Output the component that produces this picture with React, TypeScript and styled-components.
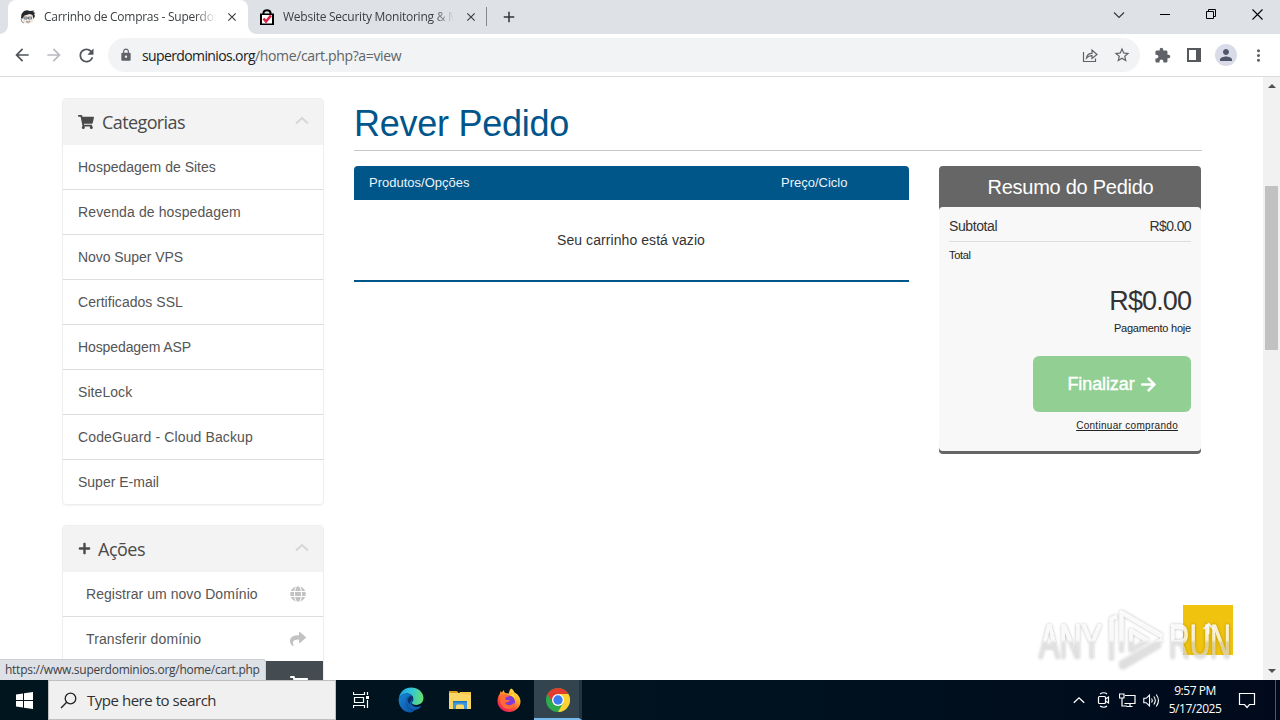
import React from 'react';
import styled, { createGlobalStyle } from 'styled-components';
import { FaShoppingCart, FaPlus, FaGlobe, FaShare, FaArrowRight, FaArrowUp } from 'react-icons/fa';
import { MdArrowBack, MdArrowForward, MdRefresh, MdLock, MdExtension, MdStarBorder, MdPerson, MdMoreVert, MdClose, MdAdd } from 'react-icons/md';

const Global = createGlobalStyle`
  *{box-sizing:border-box}
  html,body{margin:0;padding:0;overflow:hidden}
  svg{display:block;flex:none}
`;
const ui = `'Open Sans','Noto Sans',sans-serif`;
const arial = `'Liberation Sans',Arial,sans-serif`;

const Desktop = styled.div`width:1280px;height:720px;display:flex;flex-direction:column;background:#fff;font-family:${arial};position:relative;overflow:hidden;`;

/* browser chrome */
const TabStrip = styled.div`height:34px;flex:none;background:#dee1e6;display:flex;align-items:stretch;color:#3c4043;font-family:${ui};font-size:12px;`;
const Tab = styled.div<{ $active?: boolean; $w: number }>`
  width:${p => p.$w}px;display:flex;align-items:center;position:relative;
  background:${p => (p.$active ? '#fff' : 'transparent')};
  border-radius:8px 8px 0 0;
`;
const TabFoot = styled.i<{ $right?: boolean }>`
  position:absolute;bottom:0;width:8px;height:8px;
  ${p => (p.$right ? 'right:-8px' : 'left:-8px')};
  background:radial-gradient(circle at ${p => (p.$right ? '100%' : '0')} 0,transparent 7.5px,#fff 8px);
`;
const TabTitle = styled.span<{ $w: number; $ls: number; $fade: string }>`
  width:${p => p.$w}px;overflow:hidden;white-space:nowrap;letter-spacing:${p => p.$ls}px;line-height:18px;
  mask-image:linear-gradient(90deg,#000 ${p => p.$fade},transparent);
`;
const TabGap = styled.span<{ $w: number }>`width:${p => p.$w}px;flex:none;`;
const TabDivider = styled.i`width:1px;height:19px;background:#85898e;margin:7px 12px 0 1px;`;
const NewTab = styled.div`width:20px;display:flex;align-items:center;justify-content:center;color:#303438;`;
const WindowButtons = styled.div`margin-left:auto;display:flex;align-items:center;height:29px;`;
const WinBtn = styled.div`width:46px;display:flex;justify-content:center;`;

const Toolbar = styled.div`height:43px;flex:none;display:flex;align-items:center;background:#fff;border-bottom:1px solid #dadce0;padding:0 5px 0 10px;color:#5f6368;`;
const NavBtn = styled.div<{ $dim?: boolean }>`width:32px;height:32px;flex:none;display:flex;align-items:center;justify-content:center;padding-right:8px;color:${p => (p.$dim ? '#b9bbbe' : '#50545a')};`;
const Omnibox = styled.div`height:34px;width:1032px;flex:none;margin-left:2px;border-radius:17px;background:#f1f3f4;display:flex;align-items:center;padding:0 9px 0 11px;`;
const Url = styled.div`margin-left:9px;flex:1;font-family:${ui};font-size:14px;color:#5f6368;letter-spacing:-.36px;white-space:nowrap;b{font-weight:400;color:#202124;letter-spacing:-.62px}`;
const OmniIcon = styled.span`width:18px;margin-left:14px;display:flex;justify-content:center;`;
const ToolIcons = styled.div`display:flex;align-items:center;margin-left:6px;`;
const ToolBtn = styled.div`width:32px;display:flex;justify-content:center;`;
const Avatar = styled.div`width:22px;height:22px;border-radius:50%;background:#d9dce8;display:flex;align-items:center;justify-content:center;color:#50566a;`;

/* page */
const Viewport = styled.div`height:603px;flex:none;display:flex;position:relative;overflow:hidden;background:#fff;`;
const PageBody = styled.main`width:1263px;display:flex;padding:21px 0 0 62px;align-items:flex-start;`;
const Sidebar = styled.aside`width:262px;flex:none;display:flex;flex-direction:column;gap:20px;`;
const Panel = styled.section`border:1px solid #eeeeee;border-radius:4px;box-shadow:0 1px 1px rgba(0,0,0,.05);overflow:hidden;`;
const PanelHead = styled.h3`margin:0;height:46px;background:#f3f3f3;display:flex;align-items:center;padding:0 14px 1px 15px;font:400 18px/20px ${ui};color:#4a4a4a;`;
const PanelTitle = styled.span<{ $gap: number; $ls: number }>`margin-left:${p => p.$gap}px;flex:1;letter-spacing:${p => p.$ls}px;`;
const HeadChevron = styled.span`padding-bottom:2px;`;
const PanelRow = styled.div<{ $indent?: boolean; $end?: boolean }>`
  height:${p => (p.$end ? 44 : 45)}px;border-bottom:${p => (p.$end ? 0 : 1)}px solid #dddddd;display:flex;align-items:center;justify-content:space-between;
  padding:0 17px 1px ${p => (p.$indent ? 23 : 15)}px;font-size:14px;color:#555;
  svg{color:#c2c2c2}
`;
const RowText = styled.span<{ $ls: number }>`letter-spacing:${p => p.$ls}px;white-space:nowrap;`;
const DarkHead = styled.div`height:46px;background:#444c51;display:flex;justify-content:flex-end;padding:14px 15px;color:#fff;`;

const Main = styled.div`width:848px;margin-left:30px;flex:none;`;
const Title = styled.h1`margin:0;height:53px;border-bottom:1px solid #c8c8c8;font:400 36px/51px ${arial};color:#00568b;letter-spacing:-.27px;white-space:nowrap;`;
const Columns = styled.div`display:flex;gap:30px;margin-top:15px;align-items:flex-start;`;
const Cart = styled.section`width:555px;`;
const CartHead = styled.div`height:34px;background:#005589;border-radius:4px 4px 0 0;display:flex;align-items:center;padding:0 15px 2px;color:#eaf4fa;font-size:13px;`;
const CartCol = styled.span<{ $w: number }>`width:${p => p.$w}px;`;
const CartEmpty = styled.div`height:82px;border-bottom:2px solid #005589;text-align:center;font-size:14px;line-height:80px;color:#333;letter-spacing:.07px;padding-right:1px;`;

const Summary = styled.section`width:262px;background:#666;border-bottom:3px solid #666;border-radius:4px;`;
const SummaryTitle = styled.h2`margin:0;height:41px;color:#fff;text-align:center;font:400 20px/42px ${arial};letter-spacing:-.27px;padding-left:1px;`;
const SummaryBody = styled.div`height:244px;background:#f8f8f8;border-radius:4px;padding:6px 10px;color:#333;display:flex;flex-direction:column;align-items:flex-end;`;
const Subtotal = styled.div`align-self:stretch;height:29px;border-bottom:1px solid #ddd;display:flex;justify-content:space-between;font-size:14px;line-height:27px;`;
const Figure = styled.span<{ $ls: number }>`letter-spacing:${p => p.$ls}px;`;
const TotalLabel = styled.div`align-self:flex-start;font-size:11px;line-height:13px;margin-top:7px;color:#222;letter-spacing:-.3px;`;
const Amount = styled.div`font-size:27px;line-height:32px;margin-top:23px;`;
const Due = styled.div`font-size:11px;line-height:14px;margin-top:4px;color:#222;letter-spacing:-.22px;`;
const Checkout = styled.div`width:158px;height:56px;flex:none;border-radius:6px;margin-top:21px;background:#92cf92;color:#fff;font-size:18px;display:flex;align-items:center;justify-content:center;gap:5px;letter-spacing:-.1px;-webkit-text-stroke:.4px #fff;`;
const Continue = styled.div`font-size:10px;line-height:14px;margin:7px 13px 0 0;text-decoration:underline;color:#222;letter-spacing:.3px;`;

const Scrollbar = styled.div`width:17px;background:#f1f1f1;display:flex;flex-direction:column;align-items:center;`;
const Thumb = styled.i`width:13px;height:164px;background:#c1c1c1;margin-top:92px;`;
const ScrollArrow = styled.i<{ $down?: boolean }>`width:0;height:0;border:4px solid transparent;
  ${p => (p.$down ? 'border-top-color:#505050;border-bottom:0;margin:auto 0 7px' : 'border-bottom-color:#505050;border-top:0;margin:7px 0 6px')};`;
const TopButton = styled.div`position:absolute;left:1183px;top:528px;width:50px;height:50px;background:#f0c30f;display:flex;align-items:center;justify-content:center;padding-bottom:4px;color:#fff;`;
const StatusBubble = styled.div`position:absolute;left:0;top:582px;width:266px;height:21px;background:#dee1e6;border-top:1px solid #ccd0d4;border-right:1px solid #ccd0d4;border-radius:0 3px 0 0;font:12px/19px ${ui};color:#3c4043;padding-left:5px;letter-spacing:-.26px;white-space:nowrap;`;
const Watermark = styled.svg`position:absolute;left:1030px;top:600px;`;

/* taskbar */
const Taskbar = styled.footer`height:40px;flex:none;display:flex;background:linear-gradient(90deg,#00151e,#00121f 60%,#000a1c);`;
const StartBtn = styled.div`width:48px;display:flex;align-items:center;justify-content:center;`;
const SearchBox = styled.div`width:288px;background:#f0f0f0;border:1px solid #bfbfbf;display:flex;align-items:center;padding-left:11px;font:15px ${ui};color:#303030;`;
const SearchText = styled.span`margin-left:10px;letter-spacing:-.47px;`;
const TaskItem = styled.div<{ $active?: boolean; $w?: number }>`width:${p => p.$w ?? 49}px;display:flex;align-items:center;justify-content:center;
  ${p => p.$active && 'margin-left:1px;background:#33444f;border-bottom:2px solid #76b9ed;border-right:3px solid #22343f;padding:2px 0 0 2px;'}`;
const Tray = styled.div`margin-left:auto;display:flex;align-items:center;color:#fff;`;
const TrayIcon = styled.span`width:24px;display:flex;justify-content:center;`;
const Clock = styled.div`width:64px;margin-right:2px;text-align:center;font:12px/18px ${ui};letter-spacing:-.46px;white-space:nowrap;`;
const ShowDesktop = styled.i`width:5px;height:40px;border-left:1px solid #4d5a66;`;

const Chevron = () => <HeadChevron><svg width="14" height="9" viewBox="0 0 14 9"><path d="M1 7.500 7 2l6 5.500" fill="none" stroke="#d6d6d6" strokeWidth="2" /></svg></HeadChevron>;

const FaceIcon = () => (
  <svg width="16" height="16" viewBox="0 0 16 16">
    <path d="M2 7 3 4l3-2.500 4 .5 4 1-1 2 1.500 1-1 3-1 4-3 1.500H5L2.500 12z" fill="#f1e7df" />
    <path d="M1 9 1.500 5 4 2l3-.8L10 2l4.500-.5L13 3l2.500 1-1.500 1 1 2-1.500 3-1-4-3-1-3 1-2 .5L2 10z" fill="#26282b" />
    <path d="M4 8h3v2H4zM8.500 8h3v2h-3zM7 9h2" fill="#cfe0e8" stroke="#50555a" strokeWidth=".7" />
    <path d="M6 12.500q2 1 4-.5l-1.500 2z" fill="#fff" stroke="#8a7770" strokeWidth=".6" />
    <path d="M1 10l1 3 2 1" stroke="#777" strokeWidth=".8" fill="none" />
  </svg>
);
const BagIcon = () => (
  <svg width="16" height="17" viewBox="0 0 16 17">
    <path d="M4.500 5V3.500Q5 1.200 8 1.200t3.500 2.300V5" fill="none" stroke="#000" strokeWidth="2" />
    <path d="M1 4.500h14V16H1z" fill="#000" /><path d="M3 6h10v8.500H3z" fill="#fff" />
    <path d="m4.500 9.500 2.500 3L12 6.500" fill="none" stroke="#dc1f43" strokeWidth="2.500" />
  </svg>
);
const Edge = () => (
  <svg width="26" height="26" viewBox="0 0 24 24">
    <defs>
      <linearGradient id="eg" x1="0" y1=".3" x2="1" y2=".4"><stop offset="0" stopColor="#1b9de2" /><stop offset=".5" stopColor="#32c6d9" /><stop offset="1" stopColor="#66e06b" /></linearGradient>
      <linearGradient id="eb" x1="0" y1="0" x2="1" y2="1"><stop offset="0" stopColor="#1687d4" /><stop offset="1" stopColor="#0c4da3" /></linearGradient>
    </defs>
    <path d="M.7 10.500C2 4 6.500.5 12 .5c6.500 0 11.500 4.500 11.500 9.500 0 4-2.800 6.500-6.500 6.500-3 0-4.200-1-4.200-2 0-.8 1.400-1.200 1.400-3.300C14.200 8 11.500 6 8 6 4.500 6 1.800 8 .7 10.500z" fill="url(#eg)" />
    <path d="M.6 11C2 7.500 5 6 8 6c3 0 5.500 1.500 6 4-1-1.200-2.300-1.500-3.500-1.300C8 9.500 7 12 7.500 15c.6 4 4 6.500 8 6.300-1 1.200-2.500 2.200-4 2.200C5 23.300.2 18 .6 11z" fill="url(#eb)" />
    <path d="M10.500 8.800c-3 .8-4 4-2.800 7.200 1.300 4 4.500 5.500 8 5.200 2.600-.2 4.800-1.800 6-3.900-3 1.500-7 1.200-8.700-1-.8-1-.7-2 .3-3 .9-1.400.4-4.800-2.800-4.500z" fill="#1160b5" />
    <path d="M13.300 10c-1.400-1.500-3.700-1-4.300 1-.4 2 .6 4 2.300 5-.5-1.700 0-2.700 1-3.300z" fill="#0a2f66" />
  </svg>
);
const Folder = () => (
  <svg width="22" height="20" viewBox="0 0 22 20">
    <path d="M0 1h8l2 2.500H0z" fill="#e09e1e" /><path d="M0 3h22v16H0z" fill="#fbd665" /><path d="M10 3.500 11 2h11v3z" fill="#f6c74a" />
    <path d="M4 11h14v8h-3v-3q0-1.500-1.500-1.500h-5Q7 14.500 7 16v3H4z" fill="#3c97dc" /><path d="M4 11h14v1.500H4z" fill="#1c77c0" />
  </svg>
);
const Firefox = () => (
  <svg width="24" height="24" viewBox="0 0 24 24">
    <defs><linearGradient id="ff" x1=".9" y1="0" x2=".2" y2="1"><stop offset="0" stopColor="#fff14d" /><stop offset=".35" stopColor="#ffb32b" /><stop offset=".65" stopColor="#ff5634" /><stop offset="1" stopColor="#e6116b" /></linearGradient></defs>
    <path d="M14 .5c2 1 3 2.500 3.500 4 2.500 1 6 4.500 6 9C23.500 19.500 18 24 12 24S.5 19.500.5 13c0-3 1-5.500 2.500-7.500L3.500 3 5 4.500 6.500 2 8 5l4 .5C12 3.500 12.800 1.500 14 .5z" fill="url(#ff)" />
    <circle cx="12" cy="13.500" r="6" fill="#8239d6" />
    <path d="M3.500 8C6 5.500 10 5 12 8.500c-2 0-4 .8-3.600 2.500.5 1.500 3 1 4.500 1-1 2-3 2.800-4.900 2.200 1 3.800 7 4 8.800.5C19 18 14 22 9 20.500 4 19 2.500 13 3.500 8z" fill="#ff6b35" />
    <path d="M13 8c3-.5 5.500 2.200 5 6 1-4-.5-7-2.500-8.500z" fill="#ffd83f" />
  </svg>
);
const Chrome = () => (
  <svg width="24" height="24" viewBox="0 0 24 24">
    <circle cx="12" cy="12" r="12" fill="#2da94f" />
    <path d="M12 0a12 12 0 0 1 10.400 6H12L6.800 15 1.600 6A12 12 0 0 1 12 0z" fill="#e33b2e" />
    <path d="M22.400 6A12 12 0 0 1 12 24l5.200-9L17 8.500 12 6z" fill="#fdd231" />
    <circle cx="12" cy="12" r="6" fill="#fff" /><circle cx="12" cy="12" r="4.700" fill="#3a7df0" />
  </svg>
);

const categories: [string, number][] = [
  ['Hospedagem de Sites', 0], ['Revenda de hospedagem', 0.12], ['Novo Super VPS', -0.05], ['Certificados SSL', 0.04],
  ['Hospedagem ASP', -0.1], ['SiteLock', 0.07], ['CodeGuard - Cloud Backup', 0.12], ['Super E-mail', 0],
];

export default function App() {
  return (
    <Desktop>
      <Global />
      <TabStrip>
        <TabGap $w={8} />
        <Tab $w={240} $active>
          <TabFoot /><TabFoot $right />
          <TabGap $w={12} /><FaceIcon />
          <TabGap $w={8} /><TabTitle $w={172} $ls={-0.27} $fade="88%">Carrinho de Compras - Superdominios</TabTitle>
          <TabGap $w={9} /><MdClose size={14} />
        </Tab>
        <Tab $w={237}>
          <TabGap $w={11} /><BagIcon />
          <TabGap $w={8} /><TabTitle $w={171} $ls={-0.25} $fade="88%">Website Security Monitoring &amp; Malware</TabTitle>
          <TabGap $w={10} /><MdClose size={14} />
        </Tab>
        <TabDivider />
        <NewTab><MdAdd size={18} /></NewTab>
        <WindowButtons>
          <WinBtn><svg width="12" height="8" viewBox="0 0 12 8"><path d="m1 1.500 5 5 5-5" fill="none" stroke="#333" strokeWidth="1.100" /></svg></WinBtn>
          <WinBtn><svg width="10" height="10"><path d="M0 4.500h10" stroke="#000" /></svg></WinBtn>
          <WinBtn><svg width="11" height="11"><path d="M.5 2.500h7v7h-7zM2.500 2.500v-2h7v7h-2" fill="none" stroke="#000" /></svg></WinBtn>
          <WinBtn><svg width="11" height="11"><path d="m.5.5 10 10m0-10-10 10" stroke="#000" strokeWidth="1.100" /></svg></WinBtn>
        </WindowButtons>
      </TabStrip>
      <Toolbar>
        <NavBtn><MdArrowBack size={20} /></NavBtn>
        <NavBtn $dim><MdArrowForward size={20} /></NavBtn>
        <NavBtn><MdRefresh size={21} /></NavBtn>
        <Omnibox>
          <MdLock size={14} />
          <Url><b>superdominios.org</b>/home/cart.php?a=view</Url>
          <OmniIcon><svg width="16" height="15" viewBox="0 0 16 15" fill="none" stroke="#5f6368" strokeWidth="1.200"><path d="M1.500 4v9.500h12v-3M4.500 10C5 6.500 7 5.300 10 5.300V2l5 4.500-5 4V7.600C7.500 7.500 6 8.200 4.500 10z" /></svg></OmniIcon>
          <OmniIcon><MdStarBorder size={18} /></OmniIcon>
        </Omnibox>
        <ToolIcons>
          <ToolBtn><MdExtension size={17} /></ToolBtn>
          <ToolBtn><svg width="14" height="14"><path d="M1 1h12v12H1z" fill="none" stroke="#55595e" strokeWidth="2" /><path d="M9 1h4v12H9z" fill="#55595e" /></svg></ToolBtn>
          <ToolBtn><Avatar><MdPerson size={18} /></Avatar></ToolBtn>
          <ToolBtn><MdMoreVert size={19} /></ToolBtn>
        </ToolIcons>
      </Toolbar>
      <Viewport>
        <PageBody>
          <Sidebar>
            <Panel>
              <PanelHead><FaShoppingCart size={16} /><PanelTitle $gap={8} $ls={-0.6}>Categorias</PanelTitle><Chevron /></PanelHead>
              {categories.map(([name, ls], i) => (
                <PanelRow key={name} $end={i === categories.length - 1}><RowText $ls={ls}>{name}</RowText></PanelRow>
              ))}
            </Panel>
            <Panel>
              <PanelHead><FaPlus size={13} /><PanelTitle $gap={7} $ls={-0.5}>Ações</PanelTitle><Chevron /></PanelHead>
              <PanelRow $indent><RowText $ls={0.05}>Registrar um novo Domínio</RowText><FaGlobe size={16} /></PanelRow>
              <PanelRow $indent $end><RowText $ls={0.12}>Transferir domínio</RowText><FaShare size={16} /></PanelRow>
              <DarkHead><FaShoppingCart size={18} /></DarkHead>
            </Panel>
          </Sidebar>
          <Main>
            <Title>Rever Pedido</Title>
            <Columns>
              <Cart>
                <CartHead><CartCol $w={412}>Produtos/Opções</CartCol><CartCol $w={100}>Preço/Ciclo</CartCol></CartHead>
                <CartEmpty>Seu carrinho está vazio</CartEmpty>
              </Cart>
              <Summary>
                <SummaryTitle>Resumo do Pedido</SummaryTitle>
                <SummaryBody>
                  <Subtotal><Figure $ls={-0.4}>Subtotal</Figure><Figure $ls={-0.6}>R$0.00</Figure></Subtotal>
                  <TotalLabel>Total</TotalLabel>
                  <Amount><Figure $ls={-0.9}>R$0.00</Figure></Amount>
                  <Due>Pagamento hoje</Due>
                  <Checkout>Finalizar<FaArrowRight size={17} /></Checkout>
                  <Continue>Continuar comprando</Continue>
                </SummaryBody>
              </Summary>
            </Columns>
          </Main>
        </PageBody>
        <Scrollbar><ScrollArrow /><Thumb /><ScrollArrow $down /></Scrollbar>
        <TopButton><FaArrowUp size={13} /></TopButton>
        <StatusBubble>https://www.superdominios.org/home/cart.php</StatusBubble>
      </Viewport>
      <Taskbar>
        <StartBtn><svg width="17" height="17" viewBox="0 0 17 17"><path d="M0 2.400 7 1.400V8H0zM8 1.200 17 0v8H8zM0 9h7v6.600l-7-1zM8 9h9v8l-9-1.200z" fill="#fff" /></svg></StartBtn>
        <SearchBox>
          <svg width="17" height="17" viewBox="0 0 17 17"><circle cx="10.500" cy="6.500" r="5.300" fill="none" stroke="#222" strokeWidth="1.300" /><path d="M6.700 10.300 1 16" stroke="#222" strokeWidth="1.400" /></svg>
          <SearchText>Type here to search</SearchText>
        </SearchBox>
        <TaskItem $w={50}><svg width="17" height="16" viewBox="0 0 17 16"><path d="M.5 0v2.500h11V0M.5 16v-2.500h11V16M1.500 5.500h9v5h-9zM14.500 0v3M14.500 8v8" fill="none" stroke="#fff" strokeWidth="1.200" /><path d="M13 4h3v3h-3z" fill="#fff" /></svg></TaskItem>
        <TaskItem><Edge /></TaskItem>
        <TaskItem><Folder /></TaskItem>
        <TaskItem><Firefox /></TaskItem>
        <TaskItem $active $w={48}><Chrome /></TaskItem>
        <Tray>
          <TrayIcon><svg width="12" height="8" viewBox="0 0 12 8"><path d="m.8 6.800 5.200-5 5.200 5" fill="none" stroke="#fff" strokeWidth="1.300" /></svg></TrayIcon>
          <TrayIcon><svg width="14" height="16" viewBox="0 0 14 16" fill="none" stroke="#fff" strokeWidth="1.200"><rect x="2.500" y="4.500" width="7" height="7" rx="1" /><path d="m9.500 7 3-2v6l-3-2M4 2q4-2.500 7 0M4 14q4 2.500 7 0" /></svg></TrayIcon>
          <TrayIcon><svg width="17" height="15" viewBox="0 0 17 15" fill="none" stroke="#fff" strokeWidth="1.200"><path d="M6 2.500h10v8H5.500M.5 1h4.500v4H.5zM3 5v8h5M11 10.500v3M7.500 13.500h6" /></svg></TrayIcon>
          <TrayIcon><svg width="17" height="15" viewBox="0 0 17 15" fill="none" stroke="#fff" strokeWidth="1.100"><path d="M.8 5.300h2.400L6.500 2v11L3.200 9.700H.8zM8.500 5.500q1.500 2 0 4M10.800 3.500q3 4 0 8M13.200 1.500q4.500 6 0 12" /></svg></TrayIcon>
          <Clock>9:57 PM<br />5/17/2025</Clock>
          <svg width="36" height="18" viewBox="0 0 36 18"><path d="M10.500 2.500h15v11h-5l-2.500 3-2.500-3h-5z" fill="none" stroke="#fff" strokeWidth="1.200" /></svg>
          <TabGap $w={10} /><ShowDesktop />
        </Tray>
      </Taskbar>
      <Watermark width="215" height="80" viewBox="0 0 215 80">
        <defs>
          <linearGradient id="wm" gradientUnits="userSpaceOnUse" x1="0" y1="10" x2="0" y2="70"><stop offset="0" stopColor="#fff" stopOpacity=".85" /><stop offset=".5" stopColor="#fff" stopOpacity=".75" /><stop offset=".55" stopColor="#e0e0e0" stopOpacity=".6" /><stop offset="1" stopColor="#dcdcdc" stopOpacity=".6" /></linearGradient>
          <filter id="ws" x="-20%" y="-20%" width="140%" height="140%"><feDropShadow dx="0" dy="0" stdDeviation="1.800" floodColor="#000" floodOpacity=".38" /></filter>
        </defs>
        <g filter="url(#ws)" fill="url(#wm)" stroke="url(#wm)">
          <text x="9" y="58" strokeWidth=".8" fontFamily="'Liberation Sans',sans-serif" fontSize="48" textLength="63" lengthAdjust="spacingAndGlyphs">ANY</text>
          <text x="139" y="58" strokeWidth=".8" fontFamily="'Liberation Sans',sans-serif" fontSize="48" textLength="62" lengthAdjust="spacingAndGlyphs">RUN</text>
          <path d="M81.500 60V19l5-2.500M91.500 52V12.500L132 36M91.500 68l39-23M91.500 68v-5L132 40M101 30.500v20L117 40.500z" fill="none" strokeWidth="4" strokeLinejoin="round" />
        </g>
      </Watermark>
    </Desktop>
  );
}
